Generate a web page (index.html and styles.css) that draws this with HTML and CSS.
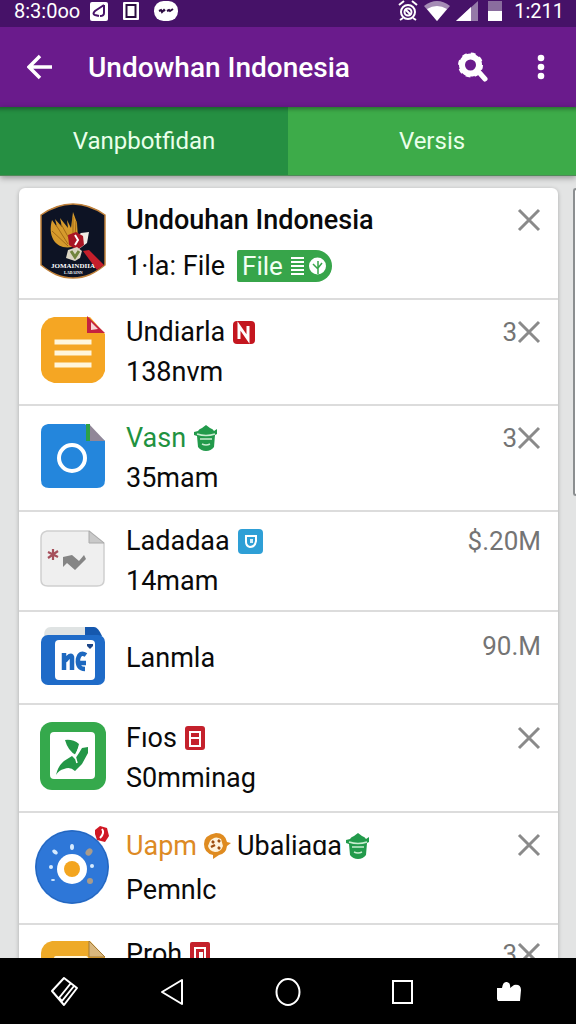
FILE: index.html
```
<!DOCTYPE html>
<html lang="id">
<head>
<meta charset="UTF-8">
<meta name="viewport" content="width=device-width, initial-scale=1.0">
<title>Undowhan Indonesia</title>
<link rel="stylesheet" href="styles.css">
</head>
<body>

<div class="status-bar">
  <span class="status-time">8:3:0oo</span>
  <svg width="18" height="20" viewBox="0 0 18 20"><rect y="1" width="18" height="19" rx="2" fill="#fff"/><path d="M14 4L5 10q-3 3 0 4l4 1M14 4v8q0 3-4 3" fill="none" stroke="#461268" stroke-width="2"/></svg>
  <svg class="gap-wide" width="16" height="20" viewBox="0 0 16 20"><rect y="1" width="16" height="18" rx="1" fill="#fff"/><rect x="3.500" y="4" width="9" height="12" fill="#fff" stroke="#2b0b40" stroke-width="2"/></svg>
  <svg class="gap-wide" width="24" height="20" viewBox="0 0 24 20"><rect y="0" width="24" height="20" rx="9.500" fill="#fff"/><path d="M5 10l2-1 1 2 2-2 1 1M13 10l2-1 1 1 3-2" fill="none" stroke="#2b0b40" stroke-width="2"/></svg>
  <div class="status-right">
    <svg width="20" height="22" viewBox="0 0 20 22"><g fill="none" stroke="#fff" stroke-width="2"><circle cx="10" cy="12" r="7"/><circle cx="10" cy="12" r="3.500"/><path d="M1 5l5-4M14 1l5 4M5 18l-3 2M15 18l3 2M7 9l6 6"/></g></svg>
    <svg width="26" height="20" viewBox="0 0 26 20"><path d="M0 5Q13-5 26 5L13 20Z" fill="#a58cb5"/><path d="M3 8Q13 2 23 8L13 20Z" fill="#fff"/></svg>
    <svg width="22" height="20" viewBox="0 0 22 20"><path d="M22 0v20H0Z" fill="#957aa8"/><path d="M15 6v14H0Z" fill="#fff"/></svg>
    <svg class="gap-wide" width="14" height="20" viewBox="0 0 14 20"><rect width="14" height="20" fill="#8a6d9e"/><rect y="10" width="14" height="10" fill="#fff"/></svg>
    <span class="status-clock">1:211</span>
  </div>
</div>

<header class="app-bar">
  <button class="icon-button" aria-label="Kembali">
    <svg width="26" height="26" viewBox="0 0 26 26"><path d="M25 13H3M13 2L2 13l11 11" fill="none" stroke="#fff" stroke-width="3.500"/></svg>
  </button>
  <h1>Undowhan Indonesia</h1>
  <button class="icon-button" aria-label="Cari">
    <svg width="32" height="30" viewBox="0 0 32 30"><path d="M19 18l8 9" stroke="#fff" stroke-width="5" stroke-linecap="round"/><circle cx="12.500" cy="13" r="8.500" fill="none" stroke="#fff" stroke-width="6"/><circle cx="12.500" cy="13" r="11" fill="none" stroke="#fff" stroke-width="3" stroke-dasharray="4.600 4.040"/></svg>
  </button>
  <button class="icon-button more" aria-label="Menu">
    <svg width="8" height="26" viewBox="0 0 8 26"><g fill="#fff"><circle cx="4" cy="4" r="3.300"/><circle cx="4" cy="13" r="3.300"/><circle cx="4" cy="22" r="3.300"/></g></svg>
  </button>
</header>

<nav class="tabs">
  <button class="tab active">Vanpbotfidan</button>
  <button class="tab">Versis</button>
</nav>

<main class="content">
  <ul class="file-list">
    <li class="row featured">
      <svg class="thumb" width="66" height="76" viewBox="0 0 66 76">
        <path d="M33 1C46 1 55 5 65 12v50C55 70 46 75 33 75S11 70 1 62V12C11 5 20 1 33 1Z" fill="#0d1324" stroke="#c0813a" stroke-width="1.500"/>
        <path d="M32 44C17 47 7 35 12 17l5 7-2-8 7 8-2-9 8 10-1-8 4 8 2-16 4 11 1 16Z" fill="#d69a2c"/>
        <path d="M16 22l12 19M21 21l10 18M12 28l16 15M33 14v22M36 18l-1 16" stroke="#a36a16" stroke-width="1"/>
        <path d="M41 30l8-1-2 11-8 6-8-5 3-5Z" fill="#f1ebe4"/>
        <path d="M28 32l8-3 7 4 1 9-7 5-8-5Z" fill="#a91523"/>
        <path d="M35 32l3 5-3 5" fill="none" stroke="#fff" stroke-width="2"/>
        <path d="M28 47l9-3 5 4-2 7-5 3-9-3Z" fill="#dcd6c5"/><path d="M31 48l4 6 4-6" fill="none" stroke="#71843e" stroke-width="3"/>
        <path d="M43 48l6-1 15 15-7 5Z" fill="#c51f2b"/>
        <text x="11" y="65" class="crest-name">JOMAINDIIA</text>
        <text x="24" y="71" class="crest-sub">LADAINN</text>
      </svg>
      <div class="info">
        <h2>Undouhan Indonesia</h2>
        <p>1·la: File
          <span class="chip">File
            <svg width="35" height="20" viewBox="0 0 35 20"><path d="M0 2h13M0 6h13M0 10h13M0 14h13M0 18h13" stroke="#fff" stroke-width="2"/><circle cx="26.500" cy="10" r="8.500" fill="#fff"/><path d="M27 18V5M27 13l-5-5M27 12l4-5" fill="none" stroke="#37a54a" stroke-width="1.500"/></svg>
          </span>
        </p>
      </div>
      <button class="close" aria-label="Hapus"><svg width="24" height="24" viewBox="0 0 24 24"><path d="M2 2l20 20M22 2L2 22"/></svg></button>
    </li>

    <li class="row">
      <svg class="thumb" width="66" height="68" viewBox="0 0 66 68">
        <path d="M14 1h36l15 17v37Q62 65 52 67H14Q2 64 1 54V14Q3 3 14 1Z" fill="#f5a623"/>
        <path d="M47 0l18 17H47Z" fill="#c4223f"/><path d="M51 6l7 7-7 1Z" fill="#f7d6d5"/>
        <path d="M17 26h32M17 37h32M17 49h32" stroke="#fff6dc" stroke-width="5" stroke-linecap="square"/>
      </svg>
      <div class="info">
        <h3>Undiarla <svg width="22" height="24" viewBox="0 0 22 24"><rect y="1" width="22" height="23" rx="4" fill="#c4161f"/><path d="M6 19V6l9 13V6" fill="none" stroke="#fff" stroke-width="3"/></svg></h3>
        <p>138nvm</p>
      </div>
      <button class="close" aria-label="Hapus">3<svg width="24" height="24" viewBox="0 0 24 24"><path d="M2 2l20 20M22 2L2 22"/></svg></button>
    </li>

    <li class="row">
      <svg class="thumb" width="66" height="66" viewBox="0 0 66 66">
        <path d="M8 1h37l20 17v39q0 8-8 8H9q-8 0-8-8V9Q1 2 8 1Z" fill="#2486dc"/>
        <path d="M49 1l16 17H49Z" fill="#918798"/><path d="M46 1h4v17h-4Z" fill="#2da047"/>
        <circle cx="32" cy="35" r="13" fill="none" stroke="#fff" stroke-width="4"/>
      </svg>
      <div class="info">
        <h3 class="green">Vasn <svg width="24" height="26" viewBox="0 0 24 26"><use href="#basket"/></svg></h3>
        <p>35mam</p>
      </div>
      <button class="close" aria-label="Hapus">3<svg width="24" height="24" viewBox="0 0 24 24"><path d="M2 2l20 20M22 2L2 22"/></svg></button>
    </li>

    <li class="row short">
      <svg class="thumb" width="66" height="58" viewBox="0 0 66 58">
        <path d="M7 1h42l15 12v37q0 6-7 6H8q-7 0-7-6V8q0-6 6-7Z" fill="#efefef" stroke="#cfcfcf" stroke-width="1.500"/>
        <path d="M49 1l15 12H49Z" fill="#c9c9c9" stroke="#aaa"/>
        <path d="M13 19v11M8 22l10 5M18 21L8 28" stroke="#a6505c" stroke-width="2.200"/>
        <path d="M23 27l9-2 7 6 5-6 2 4-11 11-8-7-4 4Z" fill="#858585"/>
      </svg>
      <div class="info">
        <h3>Ladadaa <svg width="25" height="25" viewBox="0 0 25 25"><rect width="25" height="25" rx="4" fill="#2e9fd6"/><path d="M8 7h10v5q-1 6-6 6-4-1-4-5Z" fill="none" stroke="#fff" stroke-width="2"/><path d="M12 10h3v4h-3Z" fill="#d8f0fb"/></svg></h3>
        <p>14mam</p>
      </div>
      <span class="size">$.20M</span>
    </li>

    <li class="row single">
      <svg class="thumb" width="66" height="60" viewBox="0 0 66 60">
        <path d="M4 10q0-9 7-9h34v9Z" fill="#dfe3e3"/><path d="M45 1h9q4 0 8 9H45Z" fill="#1558ae"/>
        <rect x="1" y="9" width="64" height="50" rx="7" fill="#1f6bc8"/>
        <rect x="15" y="14" width="40" height="40" rx="4" fill="#fff"/>
        <path d="M24 27v17M25 35q6-8 7-4v13M46 29q-6-4-8 4-1 10 7 10M38 37h8" fill="none" stroke="#1d68bf" stroke-width="4.500"/>
        <path d="M47 18h6v2l-3 3-3-3Z" fill="#1d4688"/>
      </svg>
      <div class="info">
        <h3>Lanmla</h3>
      </div>
      <span class="size">90.M</span>
    </li>

    <li class="row tall">
      <svg class="thumb" width="66" height="70" viewBox="0 0 66 70">
        <rect y="1" width="66" height="68" rx="12" fill="#35a94c"/>
        <rect x="10" y="11" width="45" height="47" rx="4" fill="#fff"/>
        <path d="M25 19q8-1 14 4l-3 11q-8-4-11-15ZM39 32l3-5 6-1v6l-6 11-7 7q-5-5-11-2-5 1-8 6 2-9 8-14l8-5 3 3Z" fill="#239747"/>
        <path d="M40 25l-5 10 2 7" fill="none" stroke="#fff" stroke-width="1.500"/>
      </svg>
      <div class="info">
        <h3>Fıos <svg width="20" height="24" viewBox="0 0 20 24"><rect width="20" height="24" rx="3" fill="#c4212c"/><path d="M5 20V6h10v14ZM6 12h8" fill="none" stroke="#fff" stroke-width="2"/></svg></h3>
        <p>S0mminag</p>
      </div>
      <button class="close" aria-label="Hapus"><svg width="24" height="24" viewBox="0 0 24 24"><path d="M2 2l20 20M22 2L2 22"/></svg></button>
    </li>

    <li class="row wide">
      <svg class="thumb" width="76" height="82" viewBox="0 0 76 82">
        <circle cx="37" cy="42" r="37" fill="#2e77d8"/><circle cx="37" cy="42" r="36" fill="none" stroke="#2564b8"/>
        <circle cx="37" cy="44" r="15" fill="#fff"/><circle cx="37" cy="44" r="8" fill="#f3a51f"/>
        <g fill="#d6ebff"><ellipse cx="37" cy="22" rx="2" ry="3"/><ellipse cx="20" cy="27" rx="3" ry="2" transform="rotate(40 20 27)"/><circle cx="16" cy="42" r="2"/><circle cx="57" cy="41" r="2"/><ellipse cx="18" cy="55" rx="2" ry="1"/></g>
        <g fill="#a99b8a"><ellipse cx="54" cy="27" rx="3" ry="4" transform="rotate(40 54 27)"/><circle cx="55" cy="56" r="3"/></g>
        <path d="M60 5l5-4 7 2 2 8-4 6-8-2-2-6Z" fill="#d01824"/><path d="M67 4q3 4-2 9" fill="none" stroke="#fff" stroke-width="2"/>
      </svg>
      <div class="info">
        <h3><span class="orange">Uapm</span>
          <svg width="28" height="28" viewBox="0 0 28 28"><path d="M13 1q9 0 11 9l4 1-4 3q-1 8-8 9l-6 4v-4Q1 21 1 12T13 1Z" fill="#df8b20"/><path d="M7 9q5-6 11-2l2 7q-2 6-8 6-6-1-7-6Z" fill="#fff3dc"/><path d="M9 9l2 2M15 8l2 2M8 15l4-2M15 15l2 2" stroke="#9d4d10" stroke-width="2.500"/></svg>
          <span class="joined">Ubaliaɑa <svg width="24" height="26" viewBox="0 0 24 26"><g id="basket"><path d="M0 7l4-1q1-2 4-3l4-3 4 3q3 1 4 3l3-2v5l-2 1-1 12q-3 4-8 4t-8-4L3 11l-3-1Z" fill="#229a4b"/><path d="M3 9q9 3 18 0M6 14h12M8 19q4 2 8 0" fill="none" stroke="#c8edd0" stroke-width="1.500"/></g></svg></span></h3>
        <p>Pemnlc</p>
      </div>
      <button class="close" aria-label="Hapus"><svg width="24" height="24" viewBox="0 0 24 24"><path d="M2 2l20 20M22 2L2 22"/></svg></button>
    </li>

    <li class="row short last">
      <svg class="thumb" width="66" height="68" viewBox="0 0 66 68">
        <path d="M12 1h38l15 16v41q0 9-9 9H10q-9 0-9-9V13Q2 3 12 1Z" fill="#eeaa28"/>
        <path d="M49 1l16 16H49Z" fill="#d9b77e" stroke="#a37a34"/>
        <rect x="14" y="16" width="34" height="36" rx="2" fill="#fff6dc"/>
      </svg>
      <div class="info">
        <h3>Proh <svg width="20" height="24" viewBox="0 0 20 24"><rect width="20" height="24" rx="2" fill="#c4212c"/><path d="M5 20V6h10v14" fill="none" stroke="#fff" stroke-width="2"/><rect x="9" y="10" width="4" height="6" fill="#fff"/></svg></h3>
      </div>
      <button class="close" aria-label="Hapus">3<svg width="24" height="24" viewBox="0 0 24 24"><path d="M2 2l20 20M22 2L2 22"/></svg></button>
    </li>
  </ul>
  <div class="next-panel"></div>
</main>

<footer class="nav-bar">
  <button aria-label="Putar"><svg width="30" height="32" viewBox="0 0 30 32"><path d="M14 2l13 10-13 17L2 15ZM21 7L9 22l3 3L24 10" fill="none" stroke="#fff" stroke-width="2" stroke-linejoin="round"/></svg></button>
  <button aria-label="Kembali"><svg width="30" height="32" viewBox="0 0 30 32"><path d="M21 4v24L1 16Z" fill="none" stroke="#fff" stroke-width="2" stroke-linejoin="round"/></svg></button>
  <button aria-label="Beranda"><svg width="30" height="32" viewBox="0 0 30 32"><ellipse cx="16" cy="16" rx="11.500" ry="13" fill="none" stroke="#fff" stroke-width="2"/></svg></button>
  <button aria-label="Aplikasi"><svg width="30" height="32" viewBox="0 0 30 32"><rect x="10" y="5" width="19" height="22" fill="none" stroke="#fff" stroke-width="2"/></svg></button>
  <button aria-label="Suka"><svg width="30" height="32" viewBox="0 0 30 32"><path d="M3 12h5q1-7 5-6 4 1 3 6l4-3q7-1 7 5l-1 11H4l-1-2Z" fill="#fff"/></svg></button>
</footer>

</body>
</html>
```
FILE: styles.css
```
* {
  box-sizing: border-box;
}
body {
  display: flex;
  flex-direction: column;
  height: 100vh;
  margin: 0;
  overflow: hidden;
  background: #e3e4e4;
  color: #0a0a0a;
  font-family: Roboto, Arial, sans-serif;
  font-size: 27px;
}
h1, h2, h3, p, ul {
  margin: 0;
  padding: 0;
}
svg {
  flex: none;
  display: block;
}
button {
  padding: 0;
  border: none;
  background: none;
  color: inherit;
  font: inherit;
  cursor: pointer;
}

/* Top bars */
.status-bar {
  display: flex;
  align-items: center;
  flex: none;
  height: 27px;
  padding: 0 12px 6px 14px;
  background: #461268;
  color: #fff;
  font-size: 20px;
}
.status-time {
  margin-right: 10px;
}
.gap-wide {
  margin-left: 15px;
}
.status-right {
  display: flex;
  align-items: center;
  margin-left: auto;
  gap: 6px;
}
.status-right .gap-wide {
  margin-left: 4px;
}
.status-clock {
  margin-left: 6px;
}
.app-bar {
  display: flex;
  align-items: center;
  flex: none;
  height: 80px;
  padding: 0 31px 0 27px;
  background: #6a1b8c;
  color: #fff;
}
.app-bar h1 {
  flex: 1;
  margin-left: 35px;
  font-size: 28px;
  font-weight: 500;
}
.more {
  margin-left: 47px;
}
.tabs {
  z-index: 1;
  display: flex;
  flex: none;
  height: 69px;
  border-bottom: 1px solid #4f8a58;
  box-shadow: 0 2px 6px rgba(0, 0, 0, 0.35);
}
.tab {
  flex: 1;
  background: #3dab49;
  color: #eaffea;
  font-size: 24px;
  box-shadow: inset 0 8px 4px -6px rgba(0, 0, 0, 0.35);
}
.tab.active {
  background: #258f42;
}

/* File list */
.content {
  display: flex;
  align-items: flex-start;
  justify-content: space-between;
  flex: 1;
  min-height: 0;
  padding: 12px 0 0 19px;
  overflow: hidden;
}
.file-list {
  flex: 1;
  margin-right: 15px;
  border-radius: 6px;
  background: #fff;
  box-shadow: 0 1px 4px rgba(0, 0, 0, 0.25);
  list-style: none;
}
.next-panel {
  width: 3px;
  height: 308px;
  border: 2px solid #8b8e90;
  border-right: none;
  border-radius: 6px 0 0 6px;
  background: #fff;
}
.row {
  display: flex;
  align-items: center;
  gap: 20px;
  padding: 12px 17px 12px 21px;
  border-bottom: 2px solid #dcdcdc;
}
.row.short {
  padding-top: 9px;
  padding-bottom: 9px;
}
.row.single {
  padding-top: 14px;
  padding-bottom: 13px;
}
.row.tall {
  padding-top: 13px;
  padding-bottom: 13px;
}
.row.wide {
  gap: 15px;
  padding-left: 16px;
}
.row.last {
  align-items: flex-start;
  border-bottom: none;
}
.thumb {
  margin-bottom: 4px;
}
.last .thumb {
  margin-top: 6px;
}
.info {
  display: flex;
  flex-direction: column;
  flex: 1;
}
.featured .info {
  gap: 6px;
}
.wide .info {
  gap: 4px;
}
.info h2, .info h3, .info p {
  display: flex;
  align-items: center;
  gap: 8px;
  font-size: 27px;
  font-weight: 400;
  line-height: 40px;
  white-space: nowrap;
}
.info h2 {
  font-weight: 500;
}
.featured .info p {
  gap: 12px;
}
.wide .info h3 {
  gap: 6px;
}
.joined {
  display: flex;
  align-items: center;
  gap: 4px;
}
.green {
  color: #1f9240;
}
.orange {
  color: #dd8a24;
}
.chip {
  display: flex;
  align-items: center;
  gap: 8px;
  height: 32px;
  padding: 0 6px 0 5px;
  border-radius: 2px 16px 16px 2px;
  background: #37a54a;
  color: #f2fff2;
  font-size: 26px;
}
.close, .size {
  display: flex;
  align-items: center;
  align-self: flex-start;
  height: 40px;
  color: #747474;
  font-size: 26px;
}
.close path {
  fill: none;
  stroke: #8a8a8a;
  stroke-width: 3;
}
.crest-name {
  fill: #fff;
  font: bold 7px "Liberation Serif", serif;
}
.crest-sub {
  fill: #fff;
  font: bold 4px "Liberation Serif", serif;
}

/* Bottom navigation */
.nav-bar {
  display: flex;
  align-items: center;
  justify-content: space-between;
  flex: none;
  height: 66px;
  padding: 2px 52px 0 50px;
  background: #000;
}
```
